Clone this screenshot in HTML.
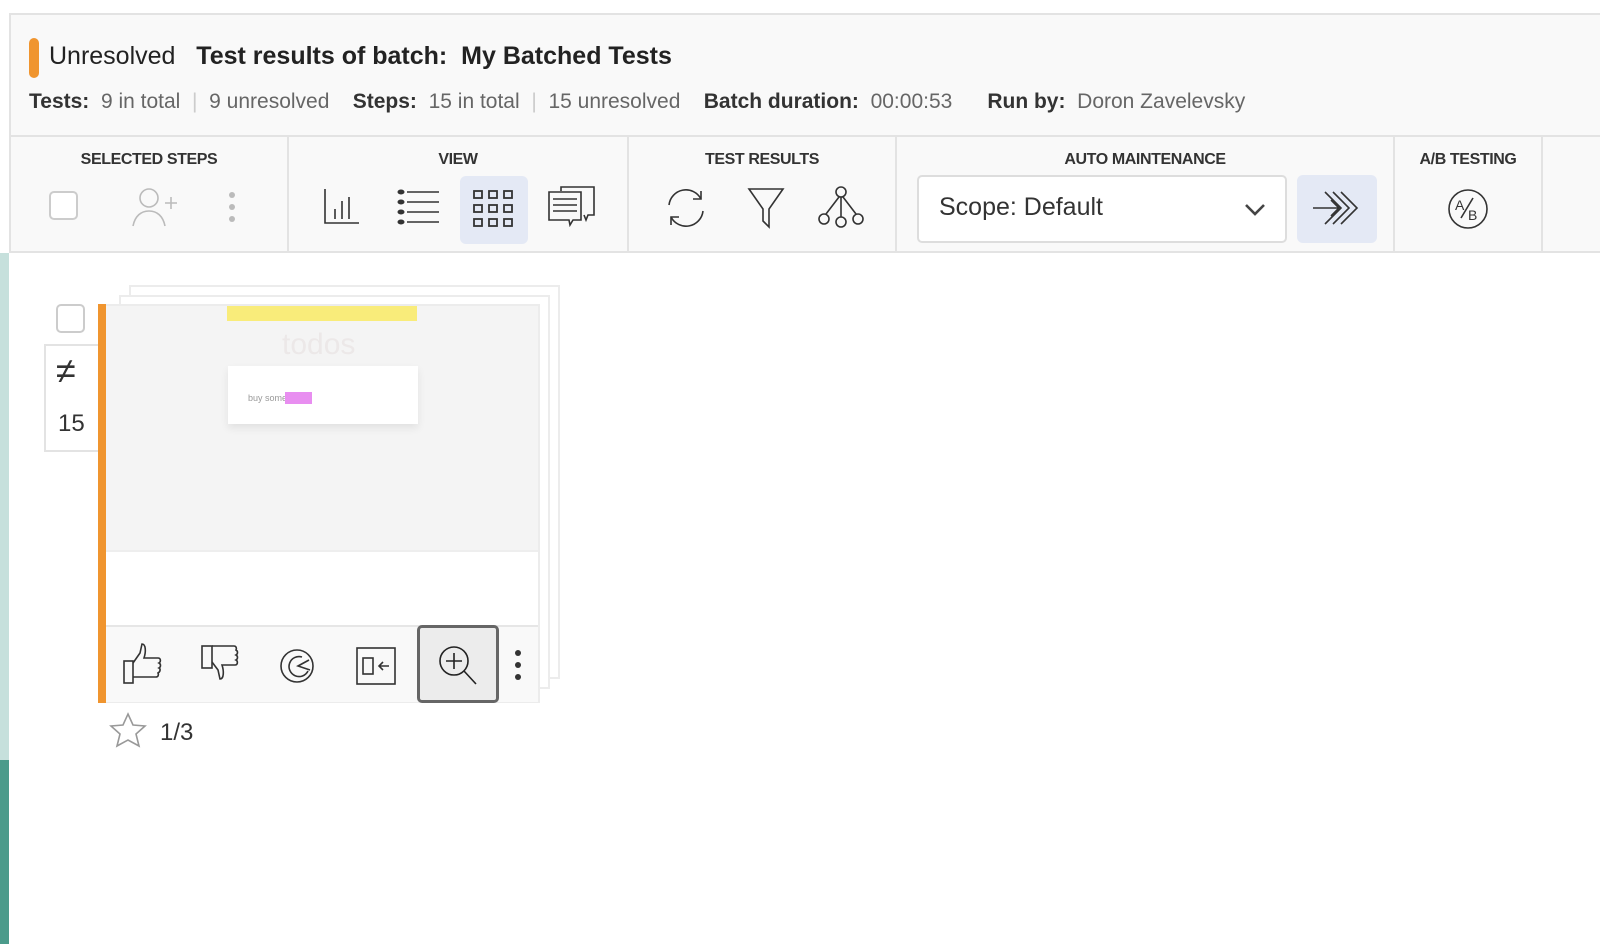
<!DOCTYPE html>
<html><head><meta charset="utf-8"><style>
*{box-sizing:border-box;margin:0;padding:0}
body{width:1600px;height:944px;background:#fff;font-family:"Liberation Sans",sans-serif;color:#222;position:relative;overflow:hidden}
.abs{position:absolute}
.hdr{left:9px;top:13px;width:1591px;height:122px;background:#f9f9f9;border-top:2px solid #e3e3e3;border-left:2px solid #e3e3e3}
.tb{left:9px;top:135px;width:1591px;height:118px;background:#f9f9f9;border-top:2px solid #e3e3e3;border-bottom:2px solid #e3e3e3;border-left:2px solid #e3e3e3}
.sec{position:absolute;top:0;height:114px;border-right:2px solid #e3e3e3}
.lbl{position:absolute;top:14px;width:100%;text-align:center;font-size:16px;font-weight:bold;color:#333;letter-spacing:-0.4px}
.ic{position:absolute}
svg{display:block}
</style></head><body>
<div class="abs" style="left:0;top:253px;width:9px;height:507px;background:#c6e0dc"></div>
<div class="abs" style="left:0;top:760px;width:9px;height:184px;background:#4b9b8b"></div>
<div class="abs hdr">
  <div class="abs" style="left:18px;top:23px;width:10px;height:40px;background:#f0952f;border-radius:5px"></div>
  <div class="abs" style="left:38px;top:27px;font-size:25px;white-space:nowrap;letter-spacing:0"><span style="color:#222">Unresolved</span>&nbsp;&nbsp; <b>Test results of batch:&nbsp; My Batched Tests</b></div>
  <div class="abs" style="left:18px;top:75px;font-size:21px;white-space:nowrap;color:#666;letter-spacing:0"><b style="color:#333">Tests:</b>&nbsp; 9 in total <span style="color:#ccc">&nbsp;|&nbsp;</span> 9 unresolved &nbsp;&nbsp;&nbsp;<b style="color:#333">Steps:</b>&nbsp; 15 in total <span style="color:#ccc">&nbsp;|&nbsp;</span> 15 unresolved &nbsp;&nbsp;&nbsp;<b style="color:#333">Batch duration:</b>&nbsp; 00:00:53 &nbsp;&nbsp;&nbsp;&nbsp;&nbsp;<b style="color:#333">Run by:</b>&nbsp; Doron Zavelevsky</div>
</div>
<div class="abs tb">
  <div class="sec" style="left:0;width:278px"><div class="lbl">SELECTED STEPS</div>
    <div class="ic" style="left:38px;top:54px;width:29px;height:29px;border:2px solid #ccc;border-radius:5px;background:#fff"></div>
    <svg class="ic" style="left:120px;top:50px" width="48" height="40" viewBox="0 0 48 40" fill="none" stroke="#bbb" stroke-width="1.6"><circle cx="18" cy="11" r="9"/><path d="M2 39c2-10 8-15 16-15s14 5 16 15M34 16h12M40 10v12"/></svg>
    <div class="ic" style="left:218px;top:55px;width:6px;line-height:0"><div style="width:6px;height:6px;border-radius:3px;background:#bbb;margin-bottom:6px"></div><div style="width:6px;height:6px;border-radius:3px;background:#bbb;margin-bottom:6px"></div><div style="width:6px;height:6px;border-radius:3px;background:#bbb"></div></div>
  </div>
  <div class="sec" style="left:278px;width:340px"><div class="lbl">VIEW</div>
    <svg class="ic" style="left:34px;top:50px" width="40" height="38" viewBox="0 0 40 38" fill="none" stroke="#333" stroke-width="1.6"><path d="M2 2v34h34M12 22v10M19 14v18M26 10v22"/></svg>
    <svg class="ic" style="left:108px;top:52px" width="44" height="36" viewBox="0 0 44 36" fill="none" stroke="#333" stroke-width="1.6"><path d="M10 3h32M10 13h32M10 23h32M10 33h32"/><g fill="#333" stroke="none"><ellipse cx="4" cy="3" rx="3.5" ry="2.5"/><ellipse cx="4" cy="13" rx="3.5" ry="2.5"/><ellipse cx="4" cy="23" rx="3.5" ry="2.5"/><ellipse cx="4" cy="33" rx="3.5" ry="2.5"/></g></svg>
    <div class="ic" style="left:171px;top:39px;width:68px;height:68px;background:#e4e9f5;border-radius:6px"></div>
    <svg class="ic" style="left:183px;top:52px" width="42" height="40" viewBox="0 0 42 40" fill="none" stroke="#333" stroke-width="1.8"><g><rect x="2" y="2" width="8" height="7"/><rect x="17" y="2" width="8" height="7"/><rect x="32" y="2" width="8" height="7"/><rect x="2" y="16" width="8" height="7"/><rect x="17" y="16" width="8" height="7"/><rect x="32" y="16" width="8" height="7"/><rect x="2" y="30" width="8" height="7"/><rect x="17" y="30" width="8" height="7"/><rect x="32" y="30" width="8" height="7"/></g></svg>
    <svg class="ic" style="left:258px;top:48px" width="50" height="42" viewBox="0 0 50 42" fill="none" stroke="#333" stroke-width="1.6"><path d="M14 6V2h33v28h-6l-2 5-2-5"/><path d="M2 7h32v28h-8l-3 5-1-5H2z"/><path d="M6 14h24M6 20h24M6 26h24"/></svg>
  </div>
  <div class="sec" style="left:618px;width:268px"><div class="lbl">TEST RESULTS</div>
    <svg class="ic" style="left:36px;top:50px" width="42" height="42" viewBox="0 0 42 42" fill="none" stroke="#333" stroke-width="1.6"><path d="M4 18a17 17 0 0 1 32-6M38 24a17 17 0 0 1-32 6"/><path d="M36 4v8h-8M6 38v-8h8"/></svg>
    <svg class="ic" style="left:118px;top:50px" width="38" height="42" viewBox="0 0 38 42" fill="none" stroke="#333" stroke-width="1.6"><path d="M2 2h34L22 22v18l-6-6V22z"/></svg>
    <svg class="ic" style="left:188px;top:48px" width="48" height="44" viewBox="0 0 48 44" fill="none" stroke="#333" stroke-width="1.6"><circle cx="24" cy="7" r="5"/><circle cx="7" cy="34" r="5"/><circle cx="24" cy="37" r="5"/><circle cx="41" cy="34" r="5"/><path d="M24 12v20M22 12 9 29M26 12l13 17"/></svg>
  </div>
  <div class="sec" style="left:886px;width:498px"><div class="lbl">AUTO MAINTENANCE</div>
    <div class="ic" style="left:20px;top:38px;width:370px;height:68px;background:#fff;border:2px solid #ddd;border-radius:5px"></div>
    <div class="ic" style="left:42px;top:56px;font-size:25px;color:#333;letter-spacing:0">Scope: Default</div>
    <svg class="ic" style="left:347px;top:66px" width="22" height="14" viewBox="0 0 22 14" fill="none" stroke="#444" stroke-width="2.6"><path d="M2 2l9 9 9-9"/></svg>
    <div class="ic" style="left:400px;top:38px;width:80px;height:68px;background:#e4e9f5;border-radius:6px"></div>
    <svg class="ic" style="left:414px;top:50px" width="54" height="42" viewBox="0 0 54 42" fill="none" stroke="#333" stroke-width="1.6"><path d="M2 21h26M20 13l8 8-8 8"/><path d="M14 5l16 16-16 16M22 5l16 16-16 16M30 5l16 16-16 16"/></svg>
  </div>
  <div class="sec" style="left:1384px;width:148px"><div class="lbl">A/B TESTING</div>
    <svg class="ic" style="left:52px;top:51px" width="42" height="42" viewBox="0 0 42 42" fill="none" stroke="#333" stroke-width="1.6"><circle cx="21" cy="21" r="19"/><text x="8" y="22" font-size="14" fill="#333" stroke="none" font-family="Liberation Sans">A</text><path d="M14 30 26 10"/><text x="21" y="32" font-size="14" fill="#333" stroke="none" font-family="Liberation Sans">B</text></svg>
  </div>
</div>
<!-- card -->
<div class="abs" style="left:129px;top:285px;width:431px;height:394px;border:2px solid #ececec;background:#fff"></div>
<div class="abs" style="left:119px;top:295px;width:431px;height:394px;border:2px solid #ececec;background:#fff"></div>
<div class="abs" style="left:56px;top:304px;width:29px;height:29px;border:2px solid #ccc;border-radius:5px;background:#fff"></div>
<div class="abs" style="left:44px;top:344px;width:54px;height:108px;border:2px solid #e3e3e3;background:#fff;border-right:none"></div>
<div class="abs" style="left:56px;top:350px;font-size:36px;color:#333">≠</div>
<div class="abs" style="left:58px;top:410px;font-size:24px;color:#333">15</div>
<div class="abs" style="left:98px;top:304px;width:8px;height:399px;background:#f0952f"></div>
<div class="abs" style="left:106px;top:304px;width:434px;height:399px;background:#fff;border:2px solid #ececec;border-left:none"></div>
<div class="abs" style="left:106px;top:306px;width:432px;height:246px;background:#f4f4f4;border-bottom:2px solid #eee"></div>
<div class="abs" style="left:227px;top:306px;width:190px;height:15px;background:#f9ec7a"></div>
<div class="abs" style="left:282px;top:328px;font-size:30px;color:#ece8e8">todos</div>
<div class="abs" style="left:228px;top:366px;width:190px;height:58px;background:#fff;box-shadow:0 4px 8px rgba(0,0,0,.08)"></div>
<div class="abs" style="left:248px;top:393px;font-size:9px;color:#999">buy some</div>
<div class="abs" style="left:285px;top:392px;width:27px;height:12px;background:#e88ef0"></div>
<div class="abs" style="left:106px;top:625px;width:432px;height:77px;background:#f9f9f9;border-top:2px solid #e6e6e6"></div>
<svg class="abs" style="left:122px;top:643px" width="40" height="42" viewBox="0 0 40 42" fill="none" stroke="#333" stroke-width="1.6"><rect x="2" y="18" width="9" height="22"/><path d="M11 20 18 10l2-9c4 0 4 8 2 14h14c3 0 3 4 1 5 2 1 2 4 0 5 2 1 1 4-1 5 1 2 0 4-2 4H11"/></svg>
<svg class="abs" style="left:200px;top:644px" width="42" height="42" viewBox="0 0 42 42" fill="none" stroke="#333" stroke-width="1.6"><rect x="2" y="2" width="10" height="22"/><path d="M12 2h22c2 0 3 2 2 4 2 1 2 4 0 5 2 1 2 4 0 5 2 1 2 5-1 5H22c2 6 2 14-2 14l-2-9-6-8"/></svg>
<svg class="abs" style="left:278px;top:647px" width="38" height="38" viewBox="0 0 38 38" fill="none" stroke="#333" stroke-width="1.6"><circle cx="19" cy="19" r="16"/><path d="M31 13 20 19l12 4"/><path d="M24 10a10 10 0 1 0 6 14"/></svg>
<svg class="abs" style="left:355px;top:646px" width="42" height="40" viewBox="0 0 42 40" fill="none" stroke="#333" stroke-width="1.6"><rect x="2" y="2" width="38" height="36"/><rect x="8" y="12" width="10" height="16"/><path d="M34 20h-10M28 16l-4 4 4 4"/></svg>
<div class="abs" style="left:417px;top:625px;width:82px;height:78px;background:#ececec;border:3px solid #666;border-radius:5px"></div>
<svg class="abs" style="left:437px;top:644px" width="42" height="42" viewBox="0 0 42 42" fill="none" stroke="#222" stroke-width="1.6"><circle cx="17" cy="17" r="14"/><path d="M17 9v16M9 17h16M27 27l12 13"/></svg>
<div class="abs" style="left:515px;top:650px;width:6px;line-height:0"><div style="width:6px;height:6px;border-radius:3px;background:#333;margin-bottom:6px"></div><div style="width:6px;height:6px;border-radius:3px;background:#333;margin-bottom:6px"></div><div style="width:6px;height:6px;border-radius:3px;background:#333"></div></div>
<svg class="abs" style="left:109px;top:712px" width="38" height="36" viewBox="0 0 38 36" fill="none" stroke="#999" stroke-width="1.6"><path d="M19 2l5 11 12 1-9 8 3 12-11-6-11 6 3-12-9-8 12-1z"/></svg>
<div class="abs" style="left:160px;top:719px;font-size:24px;color:#333">1/3</div>
</body></html>
